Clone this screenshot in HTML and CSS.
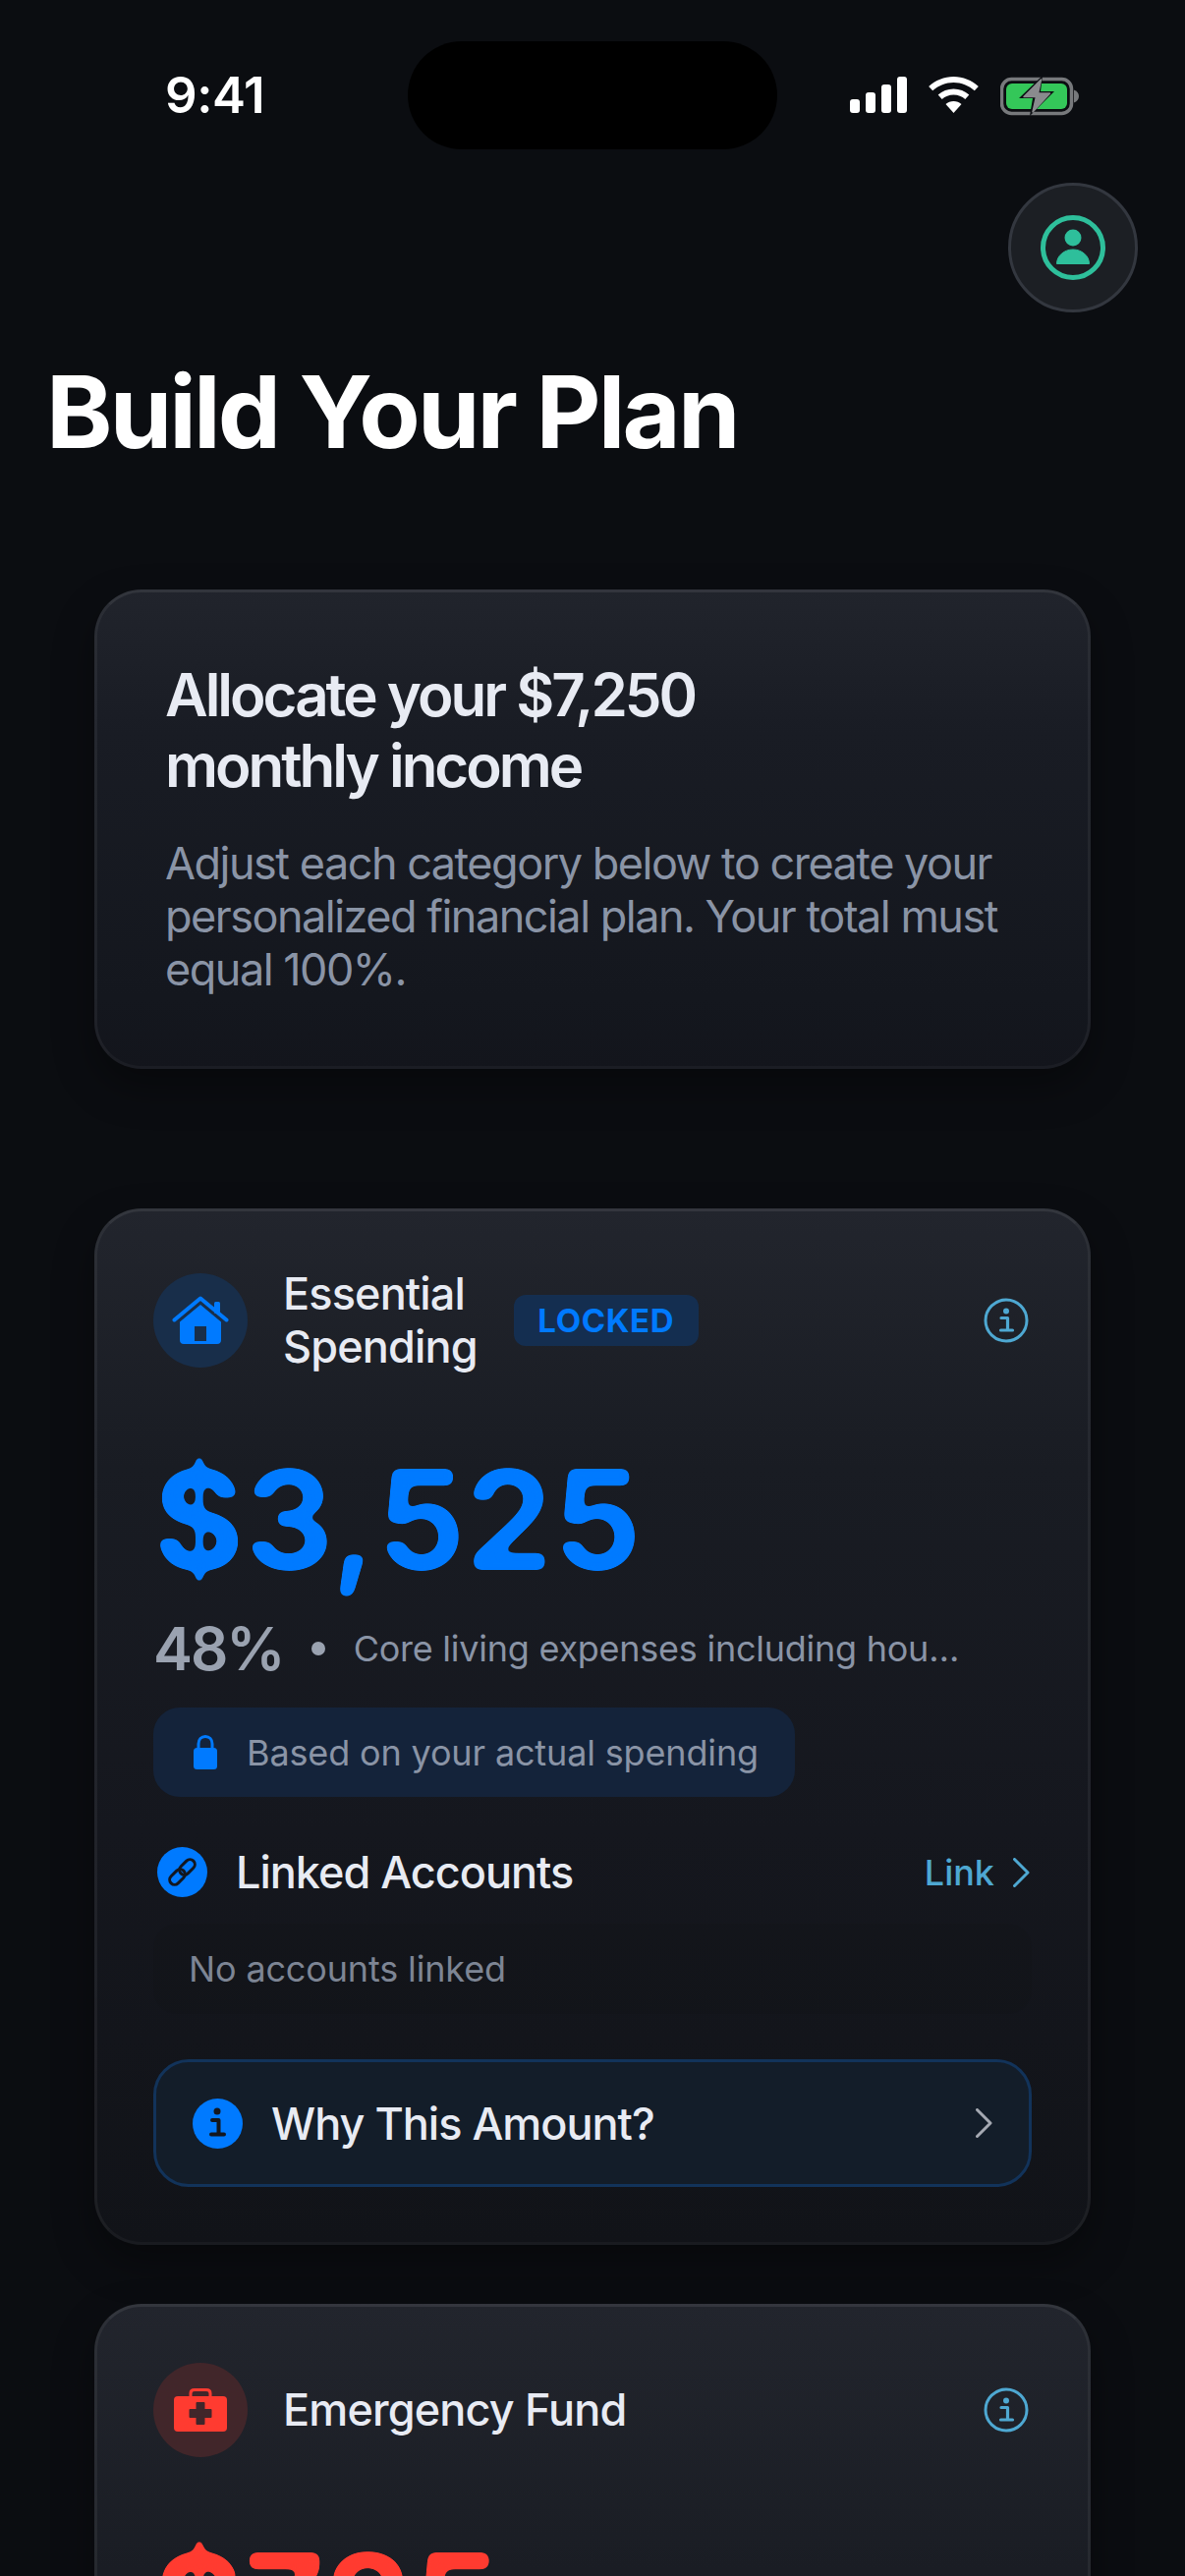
FILE: index.html
```html
<!DOCTYPE html>
<html lang="en">
<head>
<meta charset="utf-8">
<title>Build Your Plan</title>
<link rel="stylesheet" href="styles.css">
</head>
<body>
<svg class="defs" width="0" height="0" aria-hidden="true"><filter id="soften" color-interpolation-filters="sRGB" x="-5%" y="-5%" width="110%" height="110%"><feGaussianBlur stdDeviation="4"/><feColorMatrix values="1 0 0 0 0 0 1 0 0 0 0 0 1 0 0 0 0 0 14 -6.500"/></filter></svg>
<div class="screen">
  <div class="status">
    <span class="time">9:41</span>
    <div class="island"></div>
    <div class="status-icons">
      <svg class="sig" width="58" height="37" viewBox="0 0 58 37"><g fill="#fff"><rect x="0" y="23" width="10" height="14" rx="3"/><rect x="16" y="16" width="10" height="21" rx="3"/><rect x="32" y="8" width="10" height="29" rx="3"/><rect x="48" y="0" width="10" height="37" rx="3"/></g></svg>
      <svg class="wifi" width="51" height="37" viewBox="0 0 51 37"><g fill="#fff"><path d="M25.5 0C35 0 44 3.8 50.800 10L46.800 14.300C41 9.100 33.500 6 25.500 6S10 9.100 4.200 14.300L.2 10C7 3.800 16 0 25.500 0Z"/><path d="M25.500 12.500C31.500 12.500 37 14.800 41.300 18.600L37.300 22.900C34.100 20.100 30 18.400 25.500 18.400S16.900 20.100 13.700 22.900L9.700 18.600C14 14.800 19.500 12.500 25.500 12.500Z"/><path d="M25.500 25C28.500 25 31.300 26.100 33.500 28L25.500 37L17.500 28C19.700 26.100 22.500 25 25.500 25Z"/></g></svg>
      <svg class="batt" width="82" height="41" viewBox="0 0 82 41"><rect x="1.500" y="3.500" width="71" height="35" rx="10" fill="none" stroke="#77797c" stroke-width="3.500"/><rect x="6" y="8" width="62" height="26" rx="6" fill="#34c759"/><path d="M75 14.500c3 1 5 3.300 5 6.500s-2 5.500-5 6.500z" fill="#77797c"/><path d="M43 0L19 23H33L30 41L55 16H41Z" fill="#0b0d11"/><path d="M41.500 4L24 21.500H36.500L33 37L50.500 18H38.500Z" fill="#8a8b8e" stroke="#8a8b8e" stroke-width="1.500" stroke-linejoin="round"/></svg>
    </div>
  </div>

  <div class="top-actions">
    <div class="avatar">
      <svg width="66" height="66" viewBox="0 0 66 66"><circle cx="33" cy="33" r="30.500" fill="none" stroke="#2ebf9b" stroke-width="5"/><circle cx="33" cy="23" r="8.500" fill="#2ebf9b"/><path d="M16.500 49.500C16.500 41.500 24 35 33 35S49.500 41.500 49.500 49.500Z" fill="#2ebf9b" stroke="#2ebf9b" stroke-width="1" stroke-linejoin="round"/></svg>
    </div>
  </div>

  <h1 class="page-title">Build Your Plan</h1>

  <section class="card intro">
    <h2 class="intro-title">Allocate your $7,250<br>monthly income</h2>
    <p class="intro-text">Adjust each category below to create your personalized financial plan. Your total must equal 100%.</p>
  </section>

  <section class="card category">
    <div class="cat-head">
      <div class="cat-icon blue-soft">
        <svg width="58" height="50" viewBox="0 0 58 50"><path d="M2.500 24.500L29 2.500L55.500 24.500" fill="none" stroke="#007aff" stroke-width="4" stroke-linecap="round" stroke-linejoin="round"/><rect x="43" y="6" width="6" height="12" rx="1.500" fill="#007aff"/><path fill-rule="evenodd" d="M29 9L50 26.500V45C50 47.500 48.500 49 46 49H12C9.500 49 8 47.500 8 45V26.500ZM23 31V46H35V31Z" fill="#007aff"/></svg>
      </div>
      <div class="cat-title">Essential<br>Spending</div>
      <span class="badge">LOCKED</span>
      <svg class="info" width="46" height="46" viewBox="0 0 46 46"><circle cx="23" cy="23" r="21" fill="none" stroke="#4ea8d2" stroke-width="3"/><circle cx="23" cy="13.500" r="3" fill="#4ea8d2"/><path d="M18 20.500H24.500V32.500M17.500 33H29.500" fill="none" stroke="#4ea8d2" stroke-width="3.200" stroke-linecap="round" stroke-linejoin="round"/></svg>
    </div>
    <div class="amount blue">$3,525</div>
    <div class="meta">
      <span class="pct">48%</span>
      <span class="dot"></span>
      <span class="meta-text">Core living expenses including hou…</span>
    </div>
    <div class="pill">
      <svg width="24" height="35" viewBox="0 0 24 35"><path d="M5 15V9C5 4.500 8 1.500 12 1.500S19 4.500 19 9V15" fill="none" stroke="#007aff" stroke-width="3"/><rect x="0" y="13" width="24" height="22" rx="3.500" fill="#007aff"/></svg>
      <span>Based on your actual spending</span>
    </div>
    <div class="linked">
      <div class="link-badge">
        <svg width="31" height="31" viewBox="0 0 31 31"><g fill="none" stroke="#13171f" stroke-width="3"><rect x="11.500" y="5.500" width="18" height="10" rx="5" transform="rotate(-45 20.500 10.500)"/><rect x="1.500" y="15.500" width="18" height="10" rx="5" transform="rotate(-45 10.500 20.500)"/></g></svg>
      </div>
      <span class="linked-title">Linked Accounts</span>
      <span class="link-action">Link<svg width="17" height="30" viewBox="0 0 17 30"><path d="M1.500 1.500L15 15L1.500 28.500" fill="none" stroke="#4ea8d2" stroke-width="3" stroke-linecap="round" stroke-linejoin="round"/></svg></span>
    </div>
    <div class="no-accounts">No accounts linked</div>
    <div class="why">
      <svg class="why-icon" width="51" height="51" viewBox="0 0 51 51"><circle cx="25.500" cy="25.500" r="25.500" fill="#007aff"/><circle cx="25" cy="13" r="3.500" fill="#13171f"/><path d="M20 22H26.500V36M19 36.500H32" fill="none" stroke="#13171f" stroke-width="4" stroke-linecap="round" stroke-linejoin="round"/></svg>
      <span class="why-text">Why This Amount?</span>
      <svg width="17" height="30" viewBox="0 0 17 30"><path d="M1.500 1.500L15 15L1.500 28.500" fill="none" stroke="#a5a9b2" stroke-width="3" stroke-linecap="round" stroke-linejoin="round"/></svg>
    </div>
  </section>

  <section class="card category second">
    <div class="cat-head">
      <div class="cat-icon red-soft">
        <svg width="54" height="44" viewBox="0 0 54 44"><path d="M17 9V5C17 2.500 18.500 1.500 21 1.500H33C35.500 1.500 37 2.500 37 5V9" fill="none" stroke="#ff3b30" stroke-width="3"/><rect x="0" y="8" width="54" height="36" rx="4" fill="#ff3b30"/><path d="M23.500 15H30.500V22H37.500V29H30.500V36H23.500V29H16.500V22H23.500Z" fill="#41262a" stroke="#41262a" stroke-linejoin="round" stroke-width="2"/></svg>
      </div>
      <div class="cat-title">Emergency Fund</div>
      <svg class="info" width="46" height="46" viewBox="0 0 46 46"><circle cx="23" cy="23" r="21" fill="none" stroke="#4ea8d2" stroke-width="3"/><circle cx="23" cy="13.500" r="3" fill="#4ea8d2"/><path d="M18 20.500H24.500V32.500M17.500 33H29.500" fill="none" stroke="#4ea8d2" stroke-width="3.200" stroke-linecap="round" stroke-linejoin="round"/></svg>
    </div>
    <div class="amount red">$725</div>
  </section>
</div>
</body>
</html>
```

FILE: styles.css
```css
* { box-sizing: border-box; }
html, body { margin: 0; padding: 0; background: #0b0d11; }
body { font-family: Inter, "Liberation Sans", sans-serif; color: #e8ebf3; }
.defs { display: block; height: 0; }
.screen { width: 1206px; height: 2622px; overflow: hidden; background: #0b0d11; }

.status { height: 152px; padding: 42px 106px 0 168px; display: flex; align-items: flex-start; }
.time { width: 247px; height: 110px; line-height: 110px; font-size: 51px; font-weight: 600; color: #fff; letter-spacing: -0.4px; }
.island { width: 376px; height: 110px; border-radius: 55px; background: #000; }
.status-icons { margin-left: 74px; margin-top: 36px; display: flex; align-items: flex-start; gap: 22px; }
.status-icons .batt { margin-top: -1px; }

.top-actions { display: flex; justify-content: flex-end; padding: 34px 48px 0 0; }
.avatar { width: 132px; height: 132px; border-radius: 50%; background: #1c1f24; border: 3px solid #33373f; display: flex; align-items: center; justify-content: center; }

.page-title { margin: 41px 0 0 47px; font-size: 102px; line-height: 120px; font-weight: 700; color: #fff; letter-spacing: -2.85px; }

.card { margin: 0 96px; border-radius: 48px; border: 3px solid rgba(255,255,255,.05); border-top-color: rgba(255,255,255,.08); border-bottom-color: rgba(255,255,255,.035); background: linear-gradient(180deg, #22252d 0%, #191c23 25%, #15171e 60%, #111318 100%); background-origin: border-box; box-shadow: 0 18px 40px rgba(0,0,0,.35); }
.intro { margin-top: 121px; height: 488px; padding: 68px 69px 0; background-image: linear-gradient(180deg, #21242c 0%, #191c24 30%, #14171e 85%, #13151c 100%); }
.intro-title { margin: 0; font-size: 60px; line-height: 72px; font-weight: 600; color: #e8ebf3; letter-spacing: -3px; }
.intro-text { margin: 37px 0 0; font-size: 45px; line-height: 54px; color: #8a94a6; font-weight: 400; letter-spacing: -1.5px; }

.category { margin-top: 142px; height: 1055px; padding: 57px 57px 0; }
.second { margin-top: 60px; height: 600px; background-image: linear-gradient(180deg, #22252d 0%, #1a1d24 45%, #16181f 100%); }
.cat-head { display: flex; align-items: center; }
.cat-icon { width: 96px; height: 96px; border-radius: 50%; display: flex; align-items: center; justify-content: center; flex: none; }
.blue-soft { background: #182e4a; }
.red-soft { background: #41262a; }
.cat-title { margin-left: 36px; font-size: 45px; line-height: 54px; font-weight: 500; color: #e8ebf3; letter-spacing: -0.85px; }
.badge { margin-left: 37px; height: 52px; width: 188px; border-radius: 12px; background: #142e50; color: #007aff; font-size: 33px; font-weight: 700; letter-spacing: .6px; line-height: 52px; text-align: center; }
.info { margin-left: auto; margin-right: 3px; }

.amount { margin-top: 64px; font-size: 141px; line-height: 170px; font-weight: 700; letter-spacing: .2px; filter: url(#soften); }
.blue { color: #007aff; }
.red { color: #ff3b30; }

.meta { display: flex; align-items: center; margin-top: 10px; height: 72px; }
.pct { font-size: 60px; font-weight: 600; color: #9aa2b0; line-height: 72px; letter-spacing: -2px; }
.dot { width: 14px; height: 14px; border-radius: 50%; background: #9aa2b0; margin: 0 29px 0 28px; }
.meta-text { font-size: 36px; color: #8a94a6; letter-spacing: -.25px; }

.pill { margin-top: 24px; height: 91px; width: 653px; border-radius: 27px; background: #14233a; padding-left: 41px; display: flex; align-items: center; gap: 30px; font-size: 36px; color: #8a94a6; letter-spacing: -.15px; }

.linked { margin-top: 51px; height: 51px; display: flex; align-items: center; padding-left: 4px; }
.link-badge { width: 51px; height: 51px; border-radius: 50%; background: #007aff; display: flex; align-items: center; justify-content: center; }
.linked-title { margin-left: 29px; font-size: 45px; font-weight: 500; color: #e8ebf3; letter-spacing: -1px; }
.link-action { margin-left: auto; display: flex; align-items: center; gap: 19px; font-size: 36px; font-weight: 500; color: #4ea8d2; padding-right: 2px; }

.no-accounts { margin-top: 27px; height: 92px; border-radius: 24px; background: rgba(0,0,0,.04); padding-left: 36px; line-height: 92px; font-size: 36px; color: #7d8594; letter-spacing: -.15px; }

.why { margin-top: 46px; height: 130px; border-radius: 36px; border: 3px solid #12335a; background: #131d29; display: flex; align-items: center; padding: 0 37px; }
.why-text { margin-left: 29px; font-size: 45px; font-weight: 500; color: #e8ebf3; letter-spacing: -1px; flex: 1; }
```
